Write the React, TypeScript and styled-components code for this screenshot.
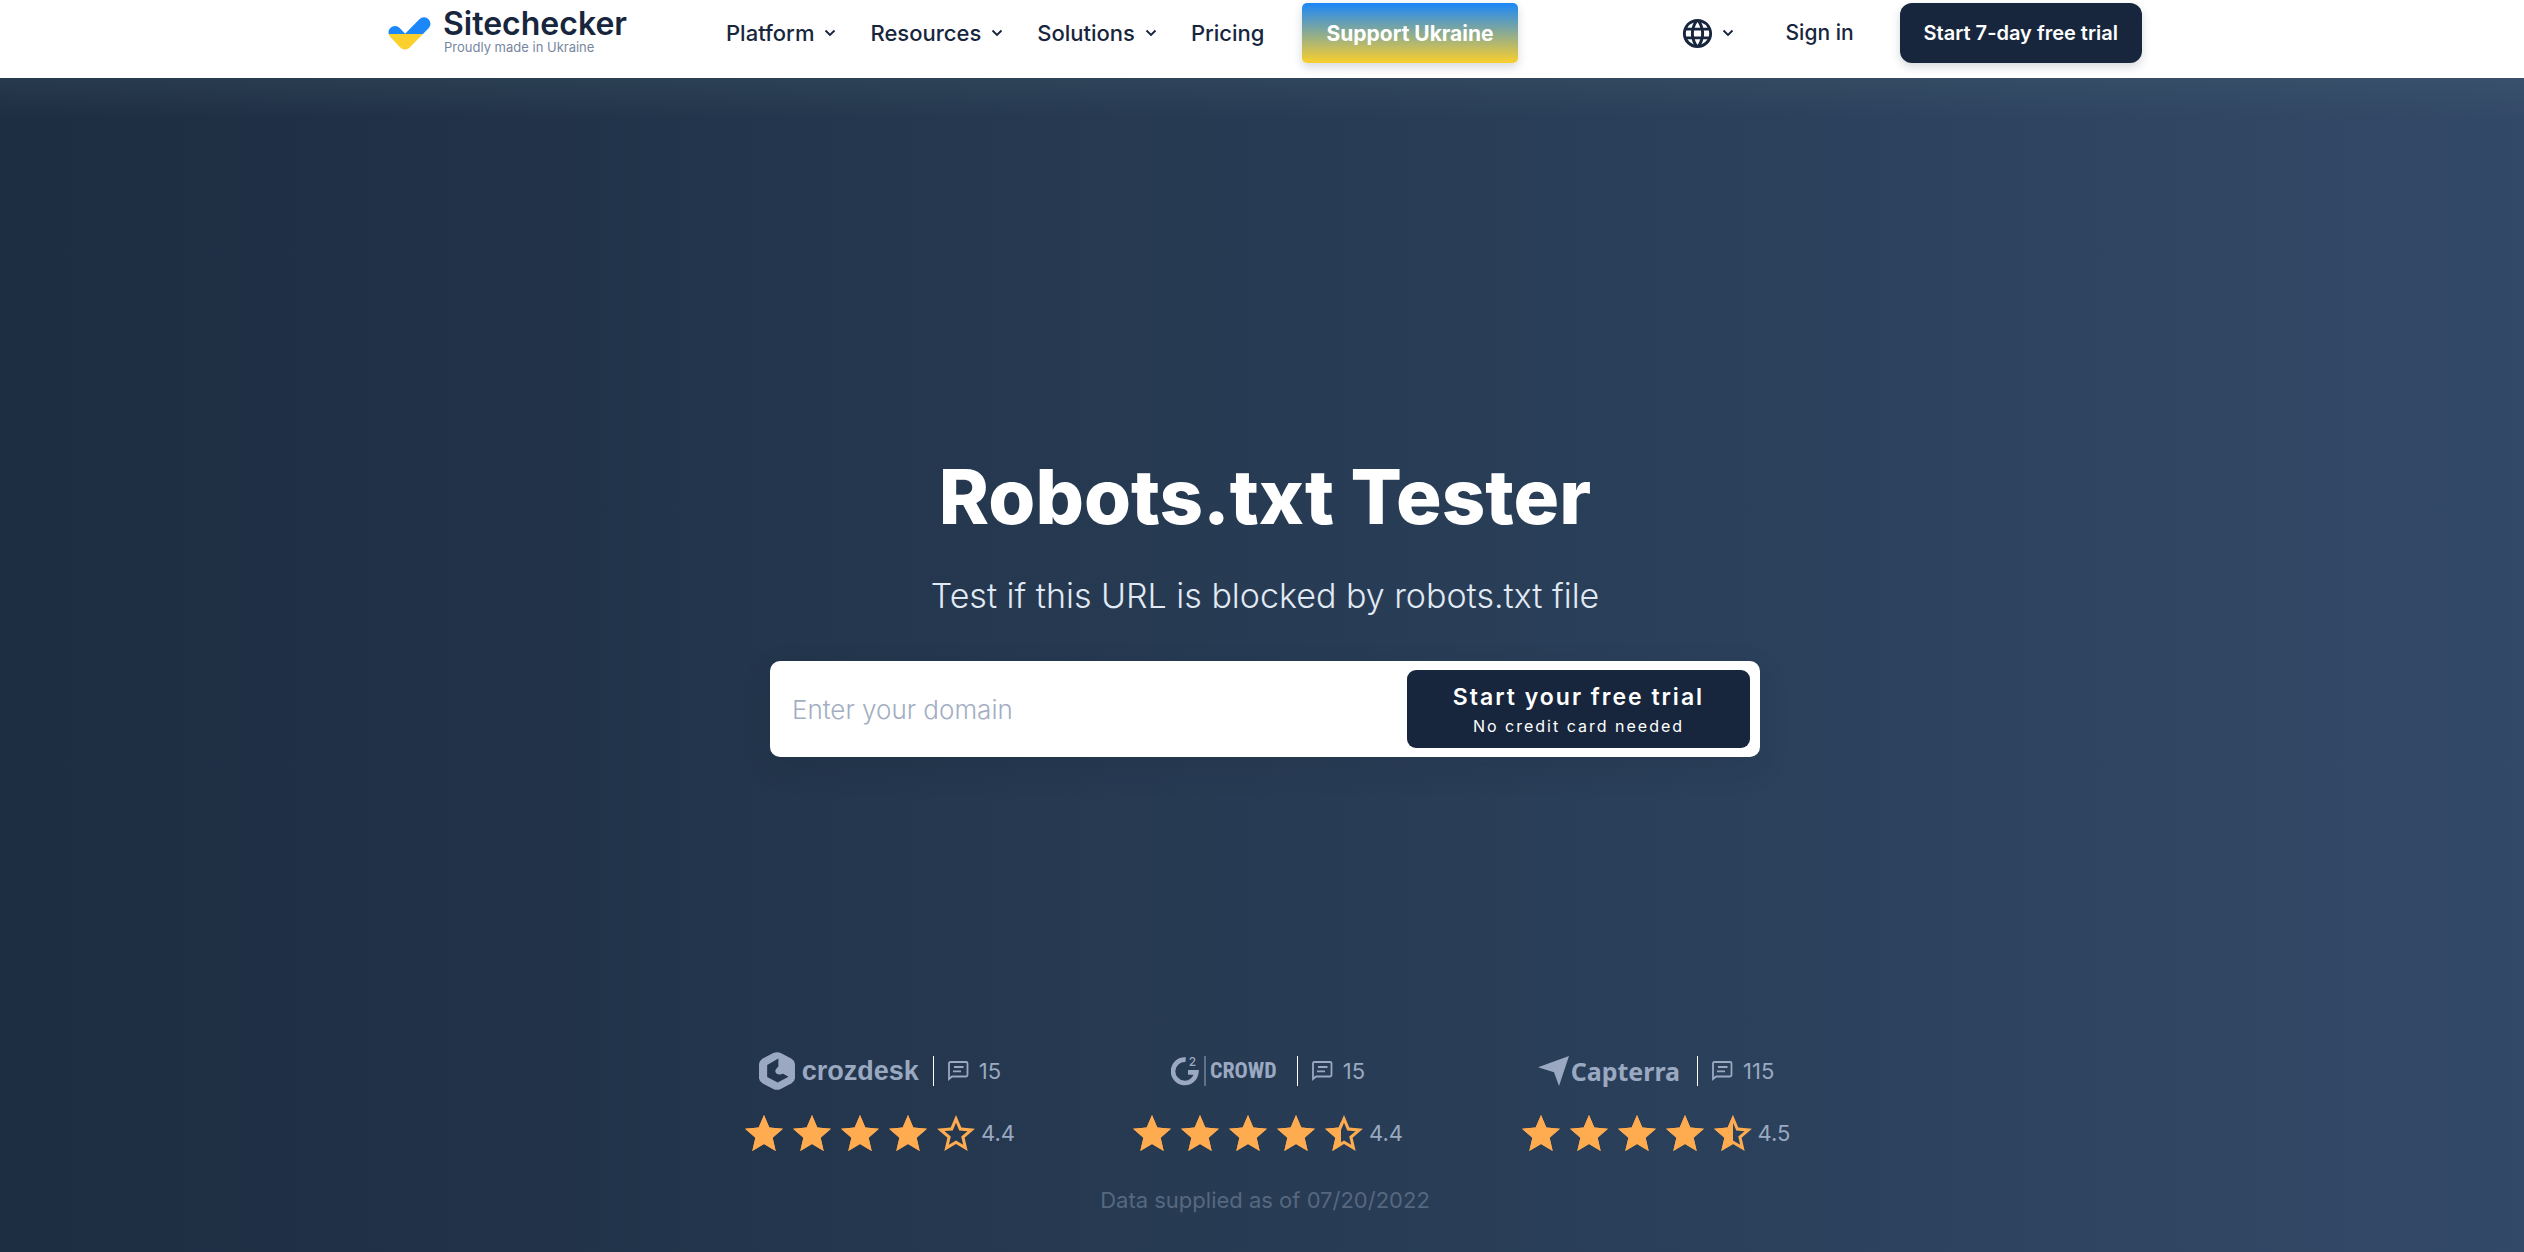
import React from "react";
import styled, { createGlobalStyle } from "styled-components";
import { MdLanguage } from "react-icons/md";

const navy = "#17263d";
const muted = "#9aa9c1";
const gold = "#ffab4f";

const GlobalStyle = createGlobalStyle`
  *, *::before, *::after { box-sizing: border-box; }
  body {
    margin: 0;
    background: #fff;
    color: ${navy};
    font-family: Inter, "Open Sans", sans-serif;
  }
  h1, p, ul { margin: 0; padding: 0; }
  ul { list-style: none; }
  button, input { font: inherit; }
  a { color: inherit; text-decoration: none; }
`;

const Page = styled.div`
  display: flex;
  flex-direction: column;
  min-height: 100vh;
`;

const Header = styled.header`
  padding: 3px 24px 15px 30px;
  background: #fff;
`;

const HeaderInner = styled.div`
  display: flex;
  align-items: center;
  max-width: 1754px;
  margin: 0 auto;
`;

const Brand = styled.a`
  display: flex;
  align-items: center;
  gap: 12px;
  width: 338px;
`;

const BrandText = styled.span`
  padding-bottom: 4px;
`;

const BrandName = styled.span`
  display: block;
  font-size: 32px;
  font-weight: 600;
  line-height: 32px;
`;

const Tagline = styled.span`
  display: block;
  padding-left: 1px;
  font-size: 13px;
  line-height: 14px;
  color: #7787a0;
`;

const Nav = styled.nav`
  display: flex;
  align-items: center;
  gap: 34px;
`;

const textControl = `
  display: inline-flex;
  align-items: center;
  padding: 0;
  border: 0;
  background: none;
  color: ${navy};
  font-weight: 500;
  line-height: 28px;
  white-space: nowrap;
  cursor: pointer;
`;

const MenuButton = styled.button`
  ${textControl}
  gap: 10px;
  font-size: 22px;
`;

const MenuLink = styled.a`
  ${textControl}
  font-size: 22px;
`;

const LanguageButton = styled.button`
  ${textControl}
  gap: 7px;
  margin-right: 6px;
`;

const SignIn = styled.a`
  ${textControl}
  font-size: 21px;
`;

const PillButton = styled.a<{ $ukraine?: boolean }>`
  display: flex;
  align-items: center;
  justify-content: center;
  height: 60px;
  padding: 0 24px;
  border-radius: ${(p) => (p.$ukraine ? 5 : 12)}px;
  background: ${(p) => (p.$ukraine ? "linear-gradient(#1b87f8, #fbcf2c)" : navy)};
  box-shadow: 0 4px 10px rgba(23, 38, 61, 0.18);
  color: #fff;
  font-size: ${(p) => (p.$ukraine ? 21 : 20)}px;
  font-weight: ${(p) => (p.$ukraine ? 700 : 600)};
  margin-left: ${(p) => (p.$ukraine ? 4 : 0)}px;
  white-space: nowrap;
`;

const Account = styled.div`
  display: flex;
  align-items: center;
  gap: 46px;
  margin-left: auto;
`;

const Hero = styled.main`
  flex: 1;
  display: flex;
  flex-direction: column;
  align-items: center;
  padding: 368px 24px 36px 30px;
  background:
    linear-gradient(rgba(80, 110, 120, 0.2), rgba(80, 110, 120, 0) 40px),
    linear-gradient(90deg, #1d2d42 0%, #24374e 35%, #2a3f59 65%, #2f4562 85%, #334968 100%);
`;

const Title = styled.h1`
  color: #fff;
  font-size: 76px;
  font-weight: 800;
  line-height: 100px;
  text-align: center;
`;

const Subtitle = styled.p`
  margin-top: 26px;
  color: #e0e9f4;
  font-size: 34px;
  font-weight: 300;
  line-height: 48px;
  text-align: center;
`;

const DomainForm = styled.form`
  display: flex;
  align-items: stretch;
  width: 100%;
  max-width: 990px;
  margin-top: 41px;
  padding: 9px 10px 9px 0;
  border-radius: 10px;
  background: #fff;
  box-shadow: 0 10px 30px rgba(20, 32, 52, 0.14);
`;

const DomainField = styled.label`
  flex: 1;
  display: flex;
  min-width: 0;
`;

const DomainInput = styled.input`
  flex: 1;
  min-width: 0;
  padding: 0 22px;
  border: 0;
  outline: 0;
  background: none;
  color: ${navy};
  font-size: 26px;
  font-weight: 300;
  &::placeholder { color: #a3aec2; opacity: 1; }
`;

const TrialButton = styled.button`
  width: 343px;
  padding: 10px 0;
  border: 0;
  border-radius: 9px;
  background: ${navy};
  color: #fff;
  cursor: pointer;
`;

const TrialTitle = styled.span`
  display: block;
  font-size: 23px;
  font-weight: 600;
  line-height: 34px;
  letter-spacing: 2px;
`;

const TrialNote = styled.span`
  display: block;
  font-size: 16px;
  line-height: 24px;
  letter-spacing: 2px;
`;

const Reviews = styled.ul`
  display: grid;
  grid-template-columns: repeat(3, 1fr);
  width: 100%;
  max-width: 1170px;
  margin-top: auto;
  padding-left: 6px;
`;

const Review = styled.li`
  display: flex;
  flex-direction: column;
  align-items: center;
  gap: 24px;
`;

const ReviewHead = styled.div`
  display: flex;
  align-items: center;
  height: 40px;
  color: ${muted};
`;

const Platform = styled.span<{ $gap: number }>`
  display: flex;
  align-items: center;
  gap: ${(p) => p.$gap}px;
`;

const PlatformName = styled.span<{ $family: string; $size: number }>`
  font-family: ${(p) => p.$family}, sans-serif;
  font-size: ${(p) => p.$size}px;
  font-weight: 700;
  line-height: 32px;
`;

const Divider = styled.span<{ $space: number }>`
  width: 1px;
  height: 30px;
  margin: 0 14px 0 ${(p) => p.$space}px;
  background: #fff;
`;

const Count = styled.span`
  margin-left: 10px;
  font-size: 22px;
  line-height: 32px;
`;

const Rating = styled.div`
  display: flex;
  align-items: center;
  color: ${muted};
  font-size: 22px;
  line-height: 36px;
`;

const Stars = styled.span`
  display: flex;
  gap: 10px;
  margin-right: 6px;
`;

const Supplied = styled.p`
  margin-top: 33px;
  color: #56687f;
  font-size: 22px;
  line-height: 32px;
`;

const Chevron = () => (
  <svg width="12" height="8" viewBox="0 0 12 8" fill="none" stroke="currentColor" strokeWidth="1.9" aria-hidden="true">
    <path d="M1.5 1.5 6 6l4.500-4.500" />
  </svg>
);

const BrandMark = () => (
  <svg width="43" height="33" viewBox="0 0 43 33" fill="none" aria-hidden="true">
    <defs>
      <linearGradient id="flag" gradientUnits="userSpaceOnUse" x1="0" y1="0" x2="0" y2="33">
        <stop offset="0.515" stopColor="#1b87f8" />
        <stop offset="0.515" stopColor="#fbcf2c" />
      </linearGradient>
    </defs>
    <path d="M7 15.500 17 26 36 6.800" stroke="url(#flag)" strokeWidth="13" strokeLinecap="round" strokeLinejoin="round" />
  </svg>
);

const ChatIcon = () => (
  <svg width="21" height="20" viewBox="0 0 21 20" fill="none" stroke="currentColor" strokeWidth="1.8" aria-hidden="true">
    <path d="M1 18V2.500Q1 1 2.500 1H18q1.500 0 1.500 1.500V14q0 1.500-1.500 1.500H4Z" />
    <path d="M6 6h9.500M5 10.300h8" />
  </svg>
);

const starOutline =
  "M22 9.240l-7.190-.62L12 2 9.190 8.630 2 9.240l5.460 4.730L5.820 21 12 17.270 18.180 21l-1.630-7.030L22 9.240zM12 15.400l-3.760 2.270 1-4.280-3.320-2.880 4.380-.38L12 6.100l1.710 4.040 4.380.38-3.320 2.880 1 4.280L12 15.400z";
const starSolid = "M12 17.270L18.180 21l-1.640-7.030L22 9.240l-7.190-.61L12 2 9.190 8.630 2 9.240l5.460 4.730L5.820 21z";

const Star = ({ fill }: { fill: number }) => (
  <svg width="38" height="36" viewBox="2 2 20 19" fill={gold} aria-hidden="true">
    <path d={starOutline} />
    {fill > 0 && (
      <svg x="2" y="2" width={20 * fill} height="19" viewBox={`2 2 ${20 * fill} 19`}>
        <path d={starSolid} />
      </svg>
    )}
  </svg>
);

const CrozdeskIcon = () => (
  <svg width="36" height="38" viewBox="0 0 106 112" aria-hidden="true">
    <path d="M42 3q11-5 22 0l31 16q10 6 11 16v42q-1 10-11 16l-31 16q-11 5-22 0L11 93Q1 87 0 77V35q1-10 11-16Z" fill={muted} />
    <path d="M57 19 24 38v36l31 16 32-17-16-9q-12 5-20-1-6-7 0-14l6-6Z" fill="#23354c" />
  </svg>
);

const G2Icon = () => (
  <svg width="35" height="38" viewBox="0 -12 105 114" aria-hidden="true">
    <path d="M44 11A35 35 0 1 0 76 49H51" fill="none" stroke={muted} strokeWidth="14" />
    <text x="53" y="30" fill={muted} fontFamily="Inter, sans-serif" fontSize="36" fontWeight="500">2</text>
    <path d="M102 0v90" stroke={muted} strokeWidth="3" />
  </svg>
);

const CapterraIcon = () => (
  <svg width="31" height="30" viewBox="0 0 93 90" aria-hidden="true">
    <path d="M0 34 93 0 63 90 48 49Z" fill={muted} />
  </svg>
);

const platforms = [
  { name: "crozdesk", icon: <CrozdeskIcon />, family: '"Liberation Sans"', size: 27, gap: 7, space: 14, count: 15, score: "4.4", partial: 0 },
  { name: "CROWD", icon: <G2Icon />, family: '"Roboto Condensed", Roboto', size: 22, gap: 4, space: 20, count: 15, score: "4.4", partial: 0.42 },
  { name: "Capterra", icon: <CapterraIcon />, family: '"Noto Sans"', size: 25, gap: 2, space: 17, count: 115, score: "4.5", partial: 0.5 },
];

export default function App() {
  return (
    <Page>
      <GlobalStyle />
      <Header>
        <HeaderInner>
          <Brand href="#">
            <BrandMark />
            <BrandText>
              <BrandName>Sitechecker</BrandName>
              <Tagline>Proudly made in Ukraine</Tagline>
            </BrandText>
          </Brand>
          <Nav aria-label="Main">
            {["Platform", "Resources", "Solutions"].map((label) => (
              <MenuButton type="button" key={label}>
                {label}
                <Chevron />
              </MenuButton>
            ))}
            <MenuLink href="#">Pricing</MenuLink>
            <PillButton href="#" $ukraine>Support Ukraine</PillButton>
          </Nav>
          <Account>
            <LanguageButton type="button" aria-label="Language">
              <MdLanguage size={35} />
              <Chevron />
            </LanguageButton>
            <SignIn href="#">Sign in</SignIn>
            <PillButton href="#">Start 7-day free trial</PillButton>
          </Account>
        </HeaderInner>
      </Header>
      <Hero>
        <Title>Robots.txt Tester</Title>
        <Subtitle>Test if this URL is blocked by robots.txt file</Subtitle>
        <DomainForm onSubmit={(e) => e.preventDefault()}>
          <DomainField>
            <DomainInput type="text" aria-label="Enter your domain" placeholder="Enter your domain" />
          </DomainField>
          <TrialButton type="submit">
            <TrialTitle>Start your free trial</TrialTitle>
            <TrialNote>No credit card needed</TrialNote>
          </TrialButton>
        </DomainForm>
        <Reviews>
          {platforms.map((p) => (
            <Review key={p.name}>
              <ReviewHead>
                <Platform $gap={p.gap}>
                  {p.icon}
                  <PlatformName $family={p.family} $size={p.size}>{p.name}</PlatformName>
                </Platform>
                <Divider $space={p.space} />
                <ChatIcon />
                <Count>{p.count}</Count>
              </ReviewHead>
              <Rating>
                <Stars>
                  {[1, 1, 1, 1, p.partial].map((fill, i) => (
                    <Star key={i} fill={fill} />
                  ))}
                </Stars>
                {p.score}
              </Rating>
            </Review>
          ))}
        </Reviews>
        <Supplied>Data supplied as of 07/20/2022</Supplied>
      </Hero>
    </Page>
  );
}
